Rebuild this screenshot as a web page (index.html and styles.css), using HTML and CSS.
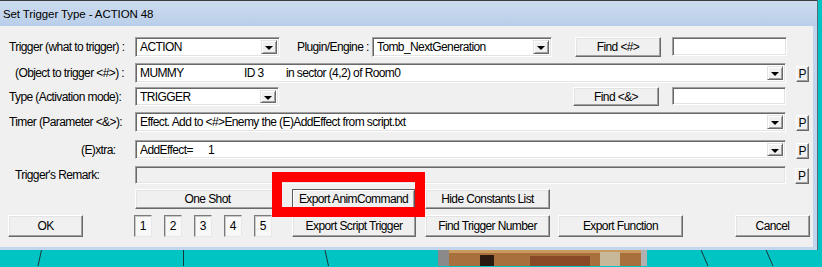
FILE: index.html
```html
<!DOCTYPE html>
<html>
<head>
<meta charset="utf-8">
<title>Set Trigger Type</title>
<link rel="stylesheet" href="styles.css">
</head>
<body>
<div class="window">
  <div class="titlebar"><span>Set Trigger Type - ACTION 48</span></div>
  <div class="client">
    <div class="row r1">
      <span class="lbl pl9">Trigger (what to trigger) :</span>
      <div class="combo w145"><span class="val">ACTION</span><span class="arrow"></span></div>
      <span class="lbl2">Plugin/Engine :</span>
      <div class="combo w180"><span class="val">Tomb_NextGeneration</span><span class="arrow"></span></div>
      <button class="btn find1">Find &lt;#&gt;</button>
      <div class="edit fedit1"></div>
    </div>
    <div class="row r2">
      <span class="lbl pl15">(Object to trigger &lt;#&gt;) :</span>
      <div class="combo wide"><span class="val"><span class="c-name">MUMMY</span><span class="c-id">ID 3</span><span>in sector (4,2) of Room0</span></span><span class="arrow"></span></div>
      <button class="pbtn">P</button>
    </div>
    <div class="row r3">
      <span class="lbl pl9">Type (Activation mode):</span>
      <div class="combo w144"><span class="val">TRIGGER</span><span class="arrow"></span></div>
      <button class="btn find2">Find &lt;&amp;&gt;</button>
      <div class="edit fedit2"></div>
    </div>
    <div class="row r4">
      <span class="lbl pl9">Timer (Parameter &lt;&amp;&gt;):</span>
      <div class="combo wide"><span class="val">Effect. Add to &lt;#&gt;Enemy the (E)AddEffect from script.txt</span><span class="arrow"></span></div>
      <button class="pbtn">P</button>
    </div>
    <div class="row r5">
      <span class="lbl pl81">(E)xtra:</span>
      <div class="combo wide"><span class="val"><span class="c-eff">AddEffect=</span><span>1</span></span><span class="arrow"></span></div>
      <button class="pbtn">P</button>
    </div>
    <div class="row r6">
      <span class="lbl pl15">Trigger's Remark:</span>
      <div class="edit disabled wide"></div>
      <button class="pbtn p6">P</button>
    </div>
    <div class="row r7">
      <span class="lbl"></span>
      <button class="btn w145">One Shot</button>
      <button class="btn anim">Export AnimCommand</button>
      <button class="btn hide">Hide Constants List</button>
    </div>
    <div class="row r8">
      <button class="btn ok">OK</button>
      <span class="num first">1</span>
      <span class="num">2</span>
      <span class="num">3</span>
      <span class="num">4</span>
      <span class="num">5</span>
      <button class="btn script">Export Script Trigger</button>
      <button class="btn findnum">Find Trigger Number</button>
      <button class="btn func">Export Function</button>
      <button class="btn cancel">Cancel</button>
    </div>
  </div>
  <div class="highlight"></div>
</div>
<svg class="desktop" width="822" height="16" viewBox="0 0 822 16">
  <rect x="0" y="0" width="822" height="16" fill="#00c4c4"/>
  <line x1="41.5" y1="0" x2="38" y2="16" stroke="#1d3535" stroke-width="1"/>
  <line x1="183.5" y1="0" x2="183.5" y2="16" stroke="#1d3535" stroke-width="1"/>
  <line x1="325" y1="0" x2="328.5" y2="16" stroke="#1d3535" stroke-width="1"/>
  <rect x="438" y="0" width="11" height="16" fill="#8a8a8a"/>
  <rect x="449" y="0" width="192" height="16" fill="#a8703c"/>
  <rect x="449" y="0" width="192" height="3" fill="#c99a5e"/>
  <rect x="480" y="5" width="14" height="11" fill="#2a1a10"/>
  <rect x="530" y="6" width="60" height="10" fill="#8a4a28"/>
  <rect x="600" y="2" width="20" height="14" fill="#c8b89a"/>
  <rect x="641" y="0" width="6" height="16" fill="#b0b0b0"/>
  <line x1="701" y1="0" x2="708" y2="16" stroke="#1d3535" stroke-width="1"/>
  <line x1="766" y1="0" x2="773" y2="16" stroke="#1d3535" stroke-width="1"/>
</svg>
</body>
</html>
```
FILE: styles.css
```css
* { box-sizing: border-box; }

body {
  margin: 0;
  background: #00c4c4;
  font-family: "Liberation Sans", Arial, sans-serif;
  font-size: 12px;
  letter-spacing: -0.6px;
  color: #000;
  overflow: hidden;
}

.window {
  position: relative;
  width: 818px;
  height: 250px;
  background: #c3d6ee;
  border-right: 1px solid #56687c;
}

.titlebar {
  height: 26px;
  border-top: 1px solid #3c3c3c;
  background: linear-gradient(#cddcf0, #b9cee9);
  padding-left: 3px;
  display: flex;
  align-items: center;
  font-size: 11.5px;
  letter-spacing: -0.1px;
}

.client {
  width: 813px;
  height: 221px;
  background: #f0f0f0;
  padding-top: 11px;
}

.row {
  display: flex;
  align-items: center;
  height: 20px;
}
.r2 { margin-top: 6px; }
.r3 { margin-top: 4px; height: 19px; }
.r4 { margin-top: 6px; }
.r5 { margin-top: 8px; height: 19px; }
.r6 { margin-top: 7px; height: 18px; }
.r7 { margin-top: 5px; }
.r8 { margin-top: 6px; height: 22px; }

.lbl {
  flex: none;
  width: 135px;
  white-space: nowrap;
}
.pl9 { padding-left: 9px; }
.pl15 { padding-left: 15px; }
.pl81 { padding-left: 81px; }

.lbl2 {
  flex: none;
  width: 75px;
  margin-left: 17px;
  white-space: nowrap;
}

.combo, .edit {
  flex: none;
  height: 100%;
  background: #fff;
  border: 1px solid;
  border-color: #a0a0a0 #fff #fff #a0a0a0;
  box-shadow: inset 1px 1px #696969, inset -1px -1px #e3e3e3;
}

.combo {
  display: flex;
  align-items: center;
  padding: 2px 2px 2px 4px;
}
.combo .val {
  flex: 1;
  white-space: pre;
  overflow: hidden;
}
.c-name { display: inline-block; width: 104px; }
.c-id { display: inline-block; width: 42px; }
.c-eff { display: inline-block; width: 68px; }

.arrow {
  flex: none;
  position: relative;
  width: 16px;
  height: 100%;
  background: #f0f0f0;
  border: 1px solid;
  border-color: #e3e3e3 #696969 #696969 #e3e3e3;
  box-shadow: inset 1px 1px #fff, inset -1px -1px #a0a0a0;
}
.arrow::after {
  content: "";
  position: absolute;
  left: 3px;
  top: 5px;
  border-left: 4px solid transparent;
  border-right: 4px solid transparent;
  border-top: 4px solid #000;
}

.w145 { width: 145px; }
.w144 { width: 144px; }
.w180 { width: 180px; }
.wide { width: 651px; }

.btn {
  flex: none;
  height: 100%;
  margin: 0;
  padding: 0;
  font: inherit;
  letter-spacing: inherit;
  color: #000;
  background: #f0f0f0;
  border: 1px solid;
  border-color: #fff #696969 #696969 #fff;
  box-shadow: inset -1px -1px #a0a0a0, inset 1px 1px #e3e3e3;
  text-align: center;
  white-space: nowrap;
}

.find1 { margin-left: 23px; width: 86px; }
.edit.fedit1 { margin-left: 11px; width: 115px; height: 19px; align-self: flex-start; }
.find2 { margin-left: 294px; width: 86px; }
.edit.fedit2 { margin-left: 13px; width: 114px; height: 18px; align-self: flex-start; }

.edit.disabled { background: #f0f0f0; }

.pbtn {
  flex: none;
  width: 13px;
  height: 16px;
  margin: 2px 0 0 10px;
  padding: 0;
  font: inherit;
  font-size: 12px;
  letter-spacing: 0;
  line-height: 14px;
  color: #000;
  background: #f0f0f0;
  border: 1px solid;
  border-color: #fff #696969 #696969 #fff;
  box-shadow: inset -1px -1px #a0a0a0;
  text-align: center;
}
.pbtn.p6 { margin-left: 9px; width: 14px; }

.anim {
  margin-left: 12px;
  width: 123px;
  border-color: #5a5a5a;
  box-shadow: inset 1px 1px #fff, inset -1px -1px #a0a0a0;
}
.hide { margin-left: 10px; width: 125px; }

.ok { margin-left: 8px; width: 75px; }
.num {
  flex: none;
  width: 18px;
  height: 100%;
  margin-left: 12px;
  background: #f8f8f8;
  border: 1px solid;
  border-color: #7a7a7a #e8e8e8 #e8e8e8 #7a7a7a;
  box-shadow: inset 1px 1px #c8c8c8;
  display: flex;
  align-items: center;
  justify-content: center;
  letter-spacing: 0;
}
.num.first { margin-left: 51px; }
.script { margin-left: 20px; width: 124px; }
.findnum { margin-left: 9px; width: 125px; }
.func { margin-left: 8px; width: 125px; }
.cancel { margin-left: 52px; width: 75px; }

.highlight {
  position: absolute;
  left: 272px;
  top: 172px;
  width: 153px;
  height: 45px;
  border: 10px solid #ff0000;
}

.desktop {
  display: block;
}
```
